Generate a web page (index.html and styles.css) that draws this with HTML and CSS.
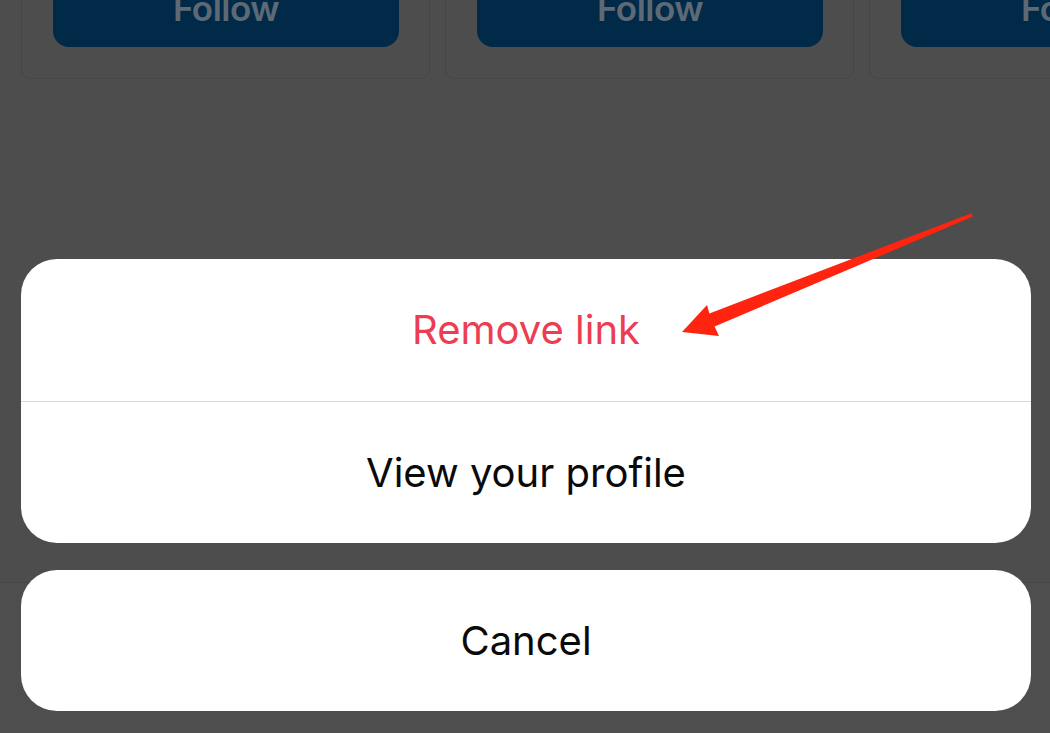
FILE: index.html
```html
<!DOCTYPE html>
<html>
<head>
<meta charset="utf-8">
<link rel="stylesheet" href="styles.css">
</head>
<body>
<div class="screen">
  <div class="cards">
    <div class="card"><div class="follow">Follow</div></div>
    <div class="card"><div class="follow">Follow</div></div>
    <div class="card"><div class="follow">Follow</div></div>
  </div>
  <div class="sheets">
    <div class="sheet">
      <div class="action danger">Remove link</div>
      <div class="action">View your profile</div>
    </div>
    <div class="sheet">
      <div class="action cancel">Cancel</div>
    </div>
  </div>
  <svg class="arrow" width="1050" height="733" viewBox="0 0 1050 733">
    <path d="M682 332 L707 305 L709.4 313.5 L971.4 213.2 L972.8 216.6 L714.6 326.5 L719 336 Z" fill="#ff2410"/>
  </svg>
</div>
</body>
</html>
```
FILE: styles.css
```css
html, body {
  margin: 0;
  padding: 0;
}
body {
  width: 1050px;
  height: 733px;
  overflow: hidden;
  background: linear-gradient(#4d4d4d 0 582px, #464646 582px 583px, #4e4e4e 583px);
  font-family: "Inter", "Liberation Sans", sans-serif;
}
.screen {
  position: relative;
  width: 1050px;
  height: 733px;
  display: flex;
  flex-direction: column;
}
.cards {
  height: 79px;
  display: flex;
  gap: 15px;
  padding-left: 21px;
  align-items: flex-end;
  overflow: hidden;
}
.card {
  flex: 0 0 409px;
  height: 140px;
  box-sizing: border-box;
  border: 1px solid #464646;
  border-radius: 9px;
  display: flex;
  flex-direction: column;
  justify-content: flex-end;
  padding: 0 30px 31px 31px;
}
.follow {
  height: 92px;
  background: #002a47;
  border-radius: 16px;
  color: #5d6a75;
  font-weight: 600;
  font-size: 35px;
  letter-spacing: -0.5px;
  text-align: center;
  line-height: 36px;
  padding-top: 35px;
  box-sizing: border-box;
}
.sheets {
  margin-top: 180px;
  padding: 0 19px 0 21px;
  display: flex;
  flex-direction: column;
  gap: 27px;
}
.sheet {
  background: #fff;
  border-radius: 36px;
  overflow: hidden;
}
.action {
  height: 141px;
  display: flex;
  align-items: center;
  justify-content: center;
  font-size: 40px;
  color: #0a0a0a;
}
.action.danger {
  color: #ec3d52;
  border-bottom: 1px solid #d8d8d8;
  padding-bottom: 1px;
}
.arrow {
  position: absolute;
  left: 0;
  top: 0;
}
```
